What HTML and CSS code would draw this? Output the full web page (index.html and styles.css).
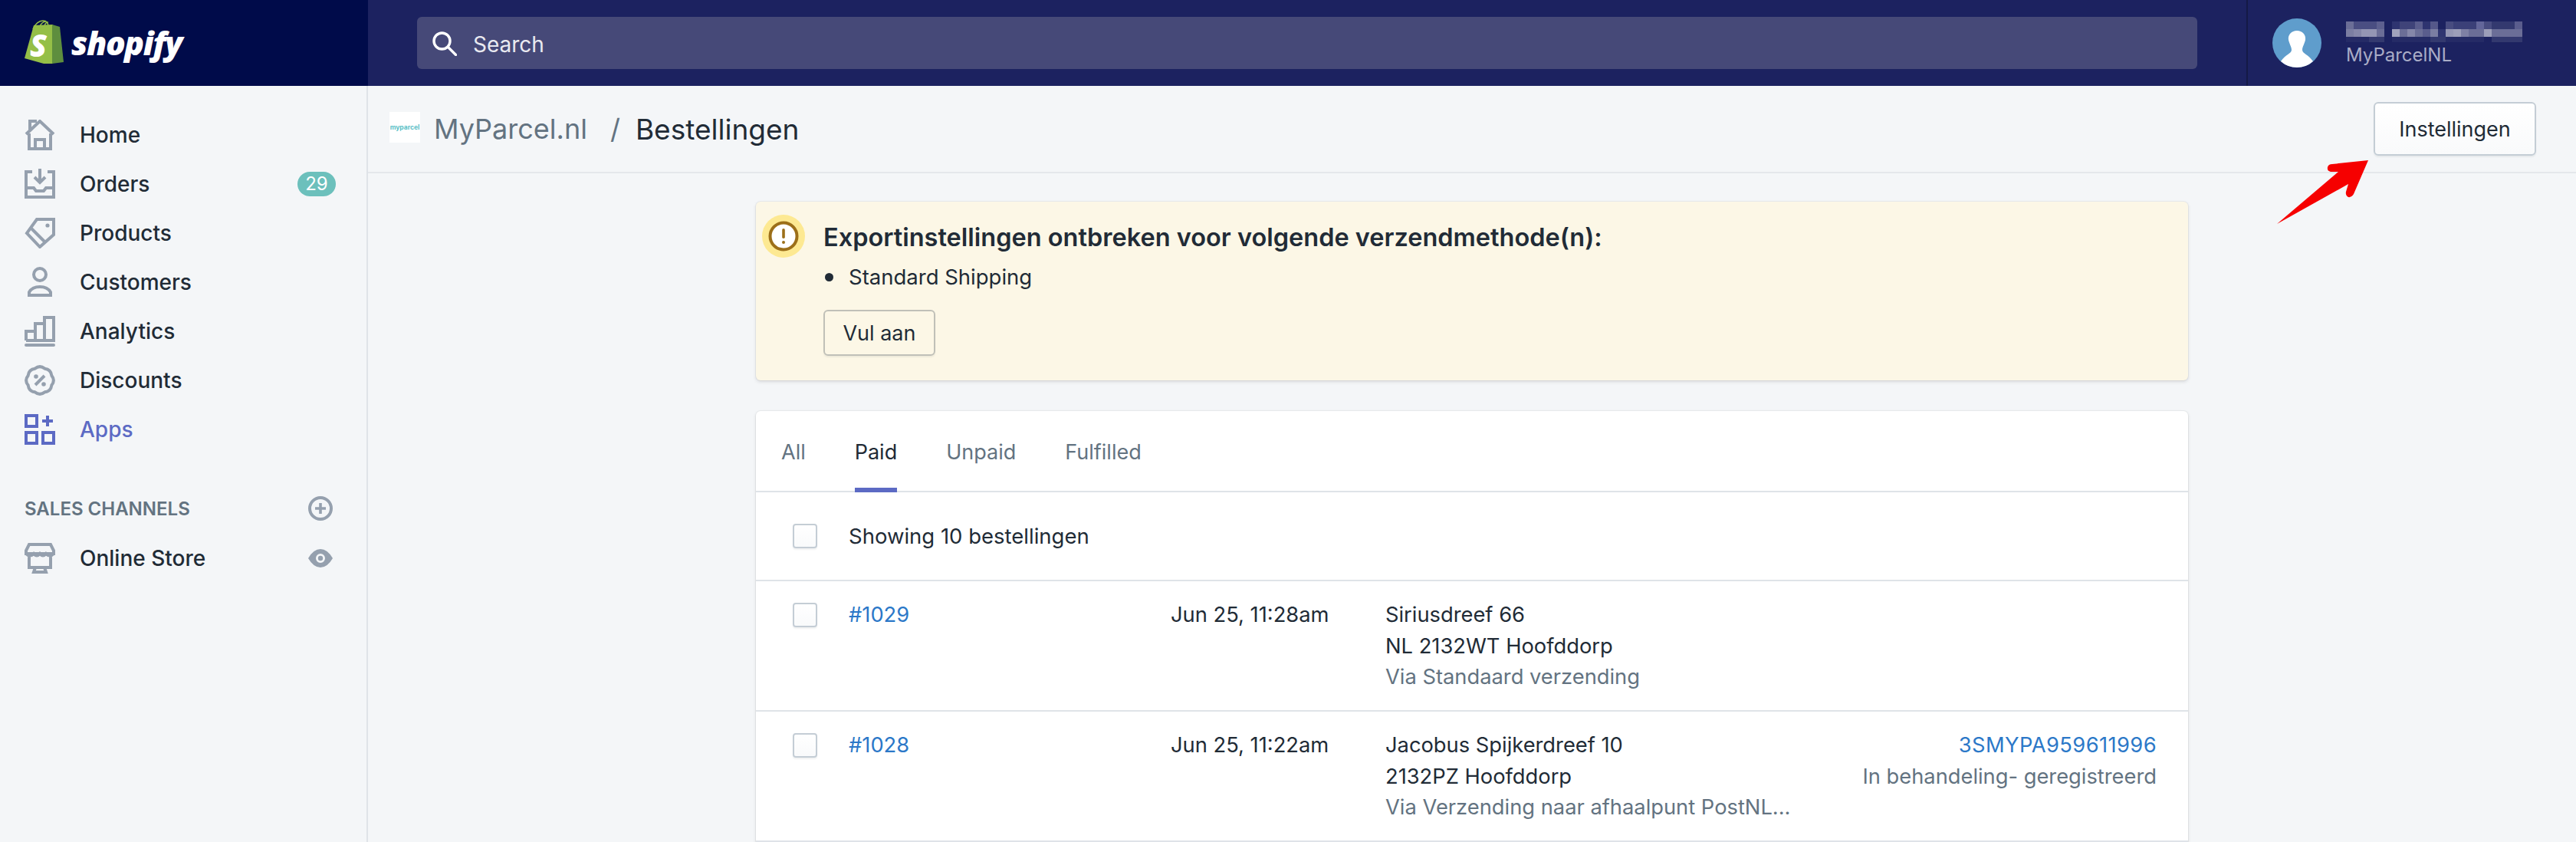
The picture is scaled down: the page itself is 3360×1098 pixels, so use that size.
FILE: index.html
```html
<!DOCTYPE html>
<html lang="en">

<head>
    <meta charset="UTF-8">
    <title>MyParcel.nl / Bestellingen</title>
    <link rel="stylesheet" href="styles.css">
</head>

<body>
    <header class="topbar">
        <div class="brand">
            <div class="brand-mark">
                <svg class="brand-bag" viewBox="0 0 52 58">
                    <path fill="none" stroke="#95bf47" stroke-width="1.600" d="M11 12 Q16 1 24 1 Q31 1 31 9 M19 10 Q22 3 27 2 M26 8 Q27 3 31 3"></path>
                    <path fill="#95bf47" d="M0 50 L12 7 L37 6 L37 57 L25 57 Z"></path>
                    <path fill="#5e8e3e" d="M36 6 L46 9 L51 55 L36 57 Z"></path>
                </svg>
                <span class="brand-s">S</span>
            </div>
            <span class="brand-name">shopify</span>
        </div>
        <div class="search-area">
            <div class="search">
                <svg class="search-icon" viewBox="0 0 32 32">
                    <circle cx="12.500" cy="12.500" r="10.500" fill="none" stroke="#fff" stroke-width="3.400"></circle>
                    <path d="M20.500 20.500 L30.500 30.500" stroke="#fff" stroke-width="3.200" stroke-linecap="round"></path>
                </svg>
                <span>Search</span>
            </div>
        </div>
        <div class="account">
            <svg class="avatar" viewBox="0 0 64 64">
                <circle cx="32" cy="32" r="32" fill="#5f9dcc"></circle>
                <path fill="#fff" d="M32 16 C25 16 20 21 21 28 C22 33 25 37 25 41 C25 46 17 47 11 56 Q20 64 32 64 Q44 64 53 56 C47 47 39 46 39 41 C39 37 42 33 43 28 C44 21 39 16 32 16 Z"></path>
            </svg>
            <div class="account-text">
                <!-- blurred account name -->
                <svg class="account-name" viewBox="0 0 230 27">
                    <rect x="0" y="0" width="10" height="10" fill="#6b6e97"></rect>
                    <rect x="10" y="0" width="30" height="10" fill="#4a4e82"></rect>
                    <rect x="40" y="0" width="10" height="10" fill="#5d608f"></rect>
                    <rect x="60" y="0" width="10" height="10" fill="#2e3470"></rect>
                    <rect x="70" y="0" width="20" height="10" fill="#3f4379"></rect>
                    <rect x="90" y="0" width="10" height="10" fill="#5a5d8d"></rect>
                    <rect x="100" y="0" width="10" height="10" fill="#2e3470"></rect>
                    <rect x="110" y="0" width="10" height="10" fill="#55588a"></rect>
                    <rect x="130" y="0" width="10" height="10" fill="#484c80"></rect>
                    <rect x="140" y="0" width="30" height="10" fill="#3b4078"></rect>
                    <rect x="170" y="0" width="10" height="10" fill="#63669a"></rect>
                    <rect x="180" y="0" width="10" height="10" fill="#484c80"></rect>
                    <rect x="190" y="0" width="30" height="10" fill="#33396f"></rect>
                    <rect x="220" y="0" width="10" height="10" fill="#5a5d8d"></rect>
                    <rect x="0" y="10" width="10" height="10" fill="#7b7ea2"></rect>
                    <rect x="10" y="10" width="10" height="10" fill="#8587a9"></rect>
                    <rect x="20" y="10" width="20" height="10" fill="#9496b4"></rect>
                    <rect x="40" y="10" width="10" height="10" fill="#6b6e97"></rect>
                    <rect x="60" y="10" width="10" height="10" fill="#a0a2bc"></rect>
                    <rect x="70" y="10" width="10" height="10" fill="#6b6e97"></rect>
                    <rect x="80" y="10" width="10" height="10" fill="#8587a9"></rect>
                    <rect x="90" y="10" width="10" height="10" fill="#6b6e97"></rect>
                    <rect x="100" y="10" width="10" height="10" fill="#5a5d8d"></rect>
                    <rect x="110" y="10" width="10" height="10" fill="#7b7ea2"></rect>
                    <rect x="120" y="10" width="10" height="10" fill="#2f3570"></rect>
                    <rect x="130" y="10" width="10" height="10" fill="#9496b4"></rect>
                    <rect x="140" y="10" width="10" height="10" fill="#9c9eb9"></rect>
                    <rect x="150" y="10" width="10" height="10" fill="#7e80a4"></rect>
                    <rect x="160" y="10" width="20" height="10" fill="#6b6e97"></rect>
                    <rect x="180" y="10" width="10" height="10" fill="#9c9eb9"></rect>
                    <rect x="190" y="10" width="40" height="10" fill="#6b6e97"></rect>
                    <rect x="0" y="20" width="30" height="7" fill="#252b66"></rect>
                    <rect x="30" y="20" width="20" height="7" fill="#33396f"></rect>
                    <rect x="60" y="20" width="50" height="7" fill="#252b66"></rect>
                    <rect x="110" y="20" width="20" height="7" fill="#33396f"></rect>
                    <rect x="130" y="20" width="50" height="7" fill="#252b66"></rect>
                    <rect x="190" y="20" width="40" height="7" fill="#33396f"></rect>
                </svg>
                <div class="account-store">MyParcelNL</div>
            </div>
        </div>
    </header>

    <div class="layout">
        <nav class="sidebar">
            <ul class="nav-list">
                <li class="nav-item">
                    <svg class="nav-icon" viewBox="0 0 20 20" fill="none" stroke="#95a0ae" stroke-width="2">
                        <path d="M3 20 V9 M17 20 V9 M3 19 H17 M1 9.500 L10 1 L19 9.500 M3.500 6.500 V1 H8"></path>
                        <path d="M7 19 V13 H13 V19"></path>
                    </svg>
                    <span>Home</span>
                </li>
                <li class="nav-item">
                    <svg class="nav-icon" viewBox="0 0 20 20" fill="none" stroke="#95a0ae" stroke-width="2">
                        <path d="M5 2 H1 V18.500 H19 V2 H15 M1 12.500 H6 L7.500 14.500 H12.500 L14 12.500 H19 M10 0 V8 M6.500 5.500 L10 9 L13.500 5.500"></path>
                    </svg>
                    <span>Orders</span>
                    <span class="nav-badge">29</span>
                </li>
                <li class="nav-item">
                    <svg class="nav-icon" viewBox="0 0 20 20" fill="none" stroke="#95a0ae" stroke-width="2">
                        <path d="M8 1 H19 V11 L10 19 L1.500 10 Z M4.500 7 L13 15.500"></path>
                        <circle cx="15" cy="5" r=".8" fill="#95a0ae" stroke-width="1"></circle>
                    </svg>
                    <span>Products</span>
                </li>
                <li class="nav-item">
                    <svg class="nav-icon" viewBox="0 0 20 20" fill="none" stroke="#95a0ae" stroke-width="2">
                        <circle cx="10" cy="5" r="4"></circle>
                        <path d="M3 18.500 V16.500 Q5 13 10 13 Q15 13 17 16.500 V18.500 Z"></path>
                    </svg>
                    <span>Customers</span>
                </li>
                <li class="nav-item">
                    <svg class="nav-icon" viewBox="0 0 20 20" fill="none" stroke="#95a0ae" stroke-width="2">
                        <path d="M1 16 V10 H7 V16 M7 16 V5 H13 V16 M13 16 V1 H19 V16 H1"></path>
                        <path d="M1 19 H19" stroke-linecap="round"></path>
                    </svg>
                    <span>Analytics</span>
                </li>
                <li class="nav-item">
                    <svg class="nav-icon" viewBox="0 0 20 20" fill="none" stroke="#95a0ae" stroke-width="2">
                        <path d="M13.180 2.330 Q17.200 2.800 17.670 6.820 Q20.200 10 17.670 13.180 Q17.200 17.200 13.180 17.670 Q10 20.200 6.820 17.670 Q2.800 17.200 2.330 13.180 Q-.2 10 2.330 6.820 Q2.800 2.800 6.820 2.330 Q10 -.2 13.180 2.330 Z"></path>
                        <path d="M7 13 L13 7"></path>
                        <circle cx="7.500" cy="7.500" r=".9" fill="#95a0ae" stroke-width="1"></circle>
                        <circle cx="12.500" cy="12.500" r=".9" fill="#95a0ae" stroke-width="1"></circle>
                    </svg>
                    <span>Discounts</span>
                </li>
                <li class="nav-item nav-item-active">
                    <svg class="nav-icon" viewBox="0 0 20 20" fill="none" stroke="#5c6ac4" stroke-width="2">
                        <path d="M1 1 H8 V8 H1 Z M1 12 H8 V19 H1 Z M12 12 H19 V19 H12 Z M15 1 V8 M11.500 4.500 H18.500"></path>
                    </svg>
                    <span>Apps</span>
                </li>
            </ul>
            <div class="channels-head">
                <span>SALES CHANNELS</span>
                <svg class="side-icon" viewBox="0 0 16 16" fill="none" stroke="#95a0ae">
                    <circle cx="8" cy="8" r="7" stroke-width="2"></circle>
                    <path d="M8 4.500 V11.500 M4.500 8 H11.500" stroke-width="1.800"></path>
                </svg>
            </div>
            <div class="nav-item">
                <svg class="nav-icon" viewBox="0 0 20 20" fill="none" stroke="#95a0ae" stroke-width="2">
                    <path d="M3 1 H17 L19 5 V7 H1 V5 Z M3 9 V16 H17 V9 M7 16 L6 19 H14 L13 16 M1 7 Q3.500 9.500 6 7 Q8 9.500 10 7 Q12 9.500 14 7 Q16.500 9.500 19 7"></path>
                </svg>
                <span>Online Store</span>
                <svg class="side-icon side-icon-end" viewBox="0 0 16 16">
                    <path fill="#95a0ae" fill-rule="evenodd" d="M0 8 Q3.500 2 8 2 Q12.500 2 16 8 Q12.500 14 8 14 Q3.500 14 0 8 Z M8 5 A3 3 0 1 0 8 11 A3 3 0 1 0 8 5 Z"></path>
                    <circle cx="8" cy="8" r="1.600" fill="#95a0ae"></circle>
                </svg>
            </div>
        </nav>

        <main class="content">
            <div class="titlebar">
                <div class="title">
                    <div class="app-logo"><span>myparcel</span></div>
                    <span class="title-app">MyParcel.nl</span>
                    <span class="title-sep">/</span>
                    <span class="title-page">Bestellingen</span>
                </div>
                <button class="btn btn-settings">Instellingen</button>
            </div>

            <svg class="arrow" viewBox="0 0 119 83">
                <path fill="#f60000" d="M0 83 L80 15 L70 15 Q65 14 66 9 Q67 5 72 5 L119 0 L100 44 Q97 49 93 48 Q89 46 90 41 L93 31 Z"></path>
            </svg>

            <div class="column">
                <section class="banner">
                    <div class="banner-icon">
                        <svg viewBox="0 0 56 56">
                            <circle cx="28" cy="28" r="28" fill="#fde992"></circle>
                            <circle cx="28" cy="28" r="17.500" fill="#fff" stroke="#9c6f19" stroke-width="4"></circle>
                            <rect x="26.200" y="18" width="3.600" height="13" rx="1.800" fill="#9c6f19"></rect>
                            <circle cx="28" cy="36" r="2" fill="#9c6f19"></circle>
                        </svg>
                    </div>
                    <div class="banner-body">
                        <h2 class="banner-title">Exportinstellingen ontbreken voor volgende verzendmethode(n):</h2>
                        <ul class="banner-list">
                            <li>Standard Shipping</li>
                        </ul>
                        <button class="btn btn-banner">Vul aan</button>
                    </div>
                </section>

                <section class="card">
                    <div class="tabs">
                        <span class="tab">All</span>
                        <span class="tab tab-active">Paid</span>
                        <span class="tab">Unpaid</span>
                        <span class="tab">Fulfilled</span>
                    </div>
                    <div class="bulk-row">
                        <span class="checkbox"></span>
                        <span>Showing 10 bestellingen</span>
                    </div>
                    <div class="order-row">
                        <span class="checkbox"></span>
                        <a class="order-id">#1029</a>
                        <span class="order-date">Jun 25, 11:28am</span>
                        <div class="order-address">
                            <div>Siriusdreef 66</div>
                            <div>NL 2132WT Hoofddorp</div>
                            <div class="muted">Via Standaard verzending</div>
                        </div>
                        <div class="order-track"></div>
                    </div>
                    <div class="order-row">
                        <span class="checkbox"></span>
                        <a class="order-id">#1028</a>
                        <span class="order-date">Jun 25, 11:22am</span>
                        <div class="order-address">
                            <div>Jacobus Spijkerdreef 10</div>
                            <div>2132PZ Hoofddorp</div>
                            <div class="muted">Via Verzending naar afhaalpunt PostNL...</div>
                        </div>
                        <div class="order-track">
                            <a class="track-link">3SMYPA959611996</a>
                            <div class="muted">In behandeling- geregistreerd</div>
                        </div>
                    </div>
                </section>
            </div>
        </main>
    </div>
</body>

</html>
```

FILE: styles.css
```css
html,
body {
    height: 100%;
}

body {
    margin: 0;
    background: #f4f6f8;
    color: #212b36;
    font-family: Inter, "Liberation Sans", sans-serif;
    font-size: 27.500px;
    overflow: hidden;
}

/* Top bar */

.topbar {
    display: flex;
    height: 112px;
    background: #1c2260;
}

.brand {
    display: flex;
    align-items: center;
    gap: 9px;
    width: 480px;
    padding-left: 32px;
    box-sizing: border-box;
    background: #000b4a;
}

.brand-mark {
    position: relative;
    width: 52px;
    height: 58px;
    margin-top: -2px;
}

.brand-bag {
    display: block;
    width: 52px;
    height: 58px;
}

.brand-s {
    position: absolute;
    top: 11px;
    left: 7px;
    color: #fff;
    font-family: "Open Sans", sans-serif;
    font-size: 40px;
    font-weight: 800;
    font-style: italic;
    line-height: 44px;
}

.brand-name {
    color: #fff;
    font-family: "Open Sans", sans-serif;
    font-size: 42.500px;
    font-weight: 800;
    font-style: italic;
    letter-spacing: -1.400px;
    line-height: 58px;
}

.search-area {
    flex: 1;
    display: flex;
    align-items: center;
    padding: 0 64px;
}

.search {
    display: flex;
    align-items: center;
    gap: 21px;
    flex: 1;
    height: 68px;
    padding-left: 20px;
    background: #464978;
    border-radius: 6px;
    color: #e9e9f0;
    font-size: 28px;
}

.search span {
    padding-top: 4px;
}

.search-icon {
    width: 32px;
    height: 32px;
    margin-top: 2px;
}

.account {
    display: flex;
    align-items: center;
    width: 430px;
    padding-left: 32px;
    box-sizing: border-box;
    border-left: 2px solid #141946;
    gap: 32px;
}

.avatar {
    width: 64px;
    height: 64px;
    flex-shrink: 0;
}

.account-text {
    padding-top: 3px;
}

.account-name {
    display: block;
    width: 230px;
    height: 27px;
}

.account-store {
    color: #a9acc6;
    font-size: 24px;
    line-height: 30px;
    margin-top: 2px;
}

/* Layout */

.layout {
    display: flex;
    height: 986px;
}

.sidebar {
    width: 480px;
    padding: 32px 0 0 32px;
    box-sizing: border-box;
    border-right: 2px solid #dfe3e8;
    flex-shrink: 0;
}

.nav-list {
    margin: 0;
    padding: 0;
    list-style: none;
}

.nav-item {
    display: flex;
    align-items: center;
    gap: 32px;
    height: 64px;
    padding-right: 40px;
    font-size: 28px;
    font-weight: 500;
    color: #212b36;
}

.nav-item-active {
    color: #5c6ac4;
}

.nav-icon {
    width: 40px;
    height: 40px;
    flex-shrink: 0;
}

.nav-badge {
    margin-left: auto;
    width: 50px;
    height: 32px;
    border-radius: 16px;
    background: #6cc0bc;
    color: #fff;
    font-size: 24px;
    font-weight: 400;
    line-height: 32px;
    text-align: center;
}

.channels-head {
    display: flex;
    align-items: center;
    justify-content: space-between;
    height: 32px;
    margin-top: 55px;
    margin-bottom: 17px;
    padding-right: 44px;
    color: #637381;
    font-size: 24px;
    font-weight: 600;
}

.side-icon {
    width: 32px;
    height: 32px;
}

.side-icon-end {
    margin-left: auto;
    margin-right: 4px;
}

/* Main */

.content {
    flex: 1;
    position: relative;
    min-width: 0;
}

.titlebar {
    display: flex;
    align-items: center;
    justify-content: space-between;
    height: 112px;
    padding: 0 52px 0 28px;
    border-bottom: 2px solid #e4e7eb;
}

.title {
    display: flex;
    align-items: center;
}

.app-logo {
    display: flex;
    align-items: center;
    justify-content: center;
    width: 40px;
    height: 40px;
    margin-top: -4px;
    margin-right: 18px;
    background: #fff;
    color: #5bbfc7;
    font-size: 8.500px;
    font-weight: 700;
}

.title-app {
    color: #637381;
    font-size: 36px;
}

.title-sep {
    margin: 0 20px 0 30px;
    color: #637381;
    font-size: 36px;
}

.title-page {
    font-size: 37px;
}

.btn {
    background: linear-gradient(#fff, #f9fafb);
    border: 2px solid #c4cdd5;
    border-radius: 6px;
    color: #212b36;
    font-family: inherit;
    font-size: 27px;
    box-shadow: 0 2px 2px rgba(22, 29, 37, 0.06);
}

.btn-settings {
    width: 212px;
    height: 70px;
}

.arrow {
    position: absolute;
    left: 2490px;
    top: 97px;
    width: 119px;
    height: 83px;
}

.column {
    width: 1868px;
    margin-left: 506px;
    padding-top: 37px;
}

.banner {
    display: flex;
    height: 233px;
    box-sizing: border-box;
    background: #fcf7e6;
    border-radius: 6px;
    box-shadow: 0 0 0 1px rgba(63, 63, 68, 0.05), 0 2px 4px rgba(63, 63, 68, 0.15);
}

.banner-icon {
    width: 88px;
    padding: 17px 0 0 8px;
    box-sizing: border-box;
    flex-shrink: 0;
}

.banner-icon svg {
    display: block;
    width: 56px;
    height: 56px;
}

.banner-body {
    padding-top: 25px;
}

.banner-title {
    margin: 0;
    font-size: 32.500px;
    font-weight: 600;
    line-height: 44px;
}

.banner-list {
    margin: 8px 0 22px;
    padding-left: 2px;
    line-height: 42px;
    list-style: none;
}

.banner-list li {
    display: flex;
    align-items: center;
    gap: 20px;
}

.banner-list li::before {
    content: "";
    width: 11px;
    height: 11px;
    border-radius: 50%;
    background: #212b36;
}

.btn-banner {
    width: 146px;
    height: 60px;
    background: transparent;
    border-color: #c0c0b8;
}

.card {
    margin-top: 40px;
    background: #fff;
    border-radius: 6px 6px 0 0;
    box-shadow: 0 0 0 1px rgba(63, 63, 68, 0.05), 0 2px 4px rgba(63, 63, 68, 0.15);
}

.tabs {
    display: flex;
    gap: 64px;
    height: 106px;
    padding-left: 33px;
    box-sizing: border-box;
    border-bottom: 2px solid #dfe3e8;
    color: #637381;
    font-size: 27px;
}

.tab {
    height: 106px;
    line-height: 108px;
    box-sizing: border-box;
}

.tab-active {
    color: #212b36;
    border-bottom: 6px solid #5c6ac4;
}

.bulk-row {
    display: flex;
    align-items: center;
    gap: 41px;
    height: 116px;
    padding-left: 48px;
    box-sizing: border-box;
    border-bottom: 2px solid #dfe3e8;
}

.checkbox {
    display: block;
    width: 32px;
    height: 32px;
    flex-shrink: 0;
    box-sizing: border-box;
    background: linear-gradient(#fff, #f9fafb);
    border: 2px solid #c4cdd5;
    border-radius: 4px;
    box-shadow: 0 2px 2px rgba(22, 29, 37, 0.06);
}

.order-row {
    display: flex;
    align-items: flex-start;
    height: 170px;
    padding: 24px 41px 0 48px;
    box-sizing: border-box;
    border-bottom: 2px solid #dfe3e8;
    font-size: 27.300px;
    line-height: 40.500px;
}

.order-row .checkbox {
    margin-top: 4px;
}

.order-id,
.track-link {
    color: #2b78c8;
}

.track-link {
    letter-spacing: 0.400px;
}

.order-id {
    width: 420px;
    margin-left: 41px;
}

.order-date {
    width: 280px;
}

.order-address {
    flex: 1;
}

.order-track {
    text-align: right;
}

.muted {
    color: #637381;
}
```
